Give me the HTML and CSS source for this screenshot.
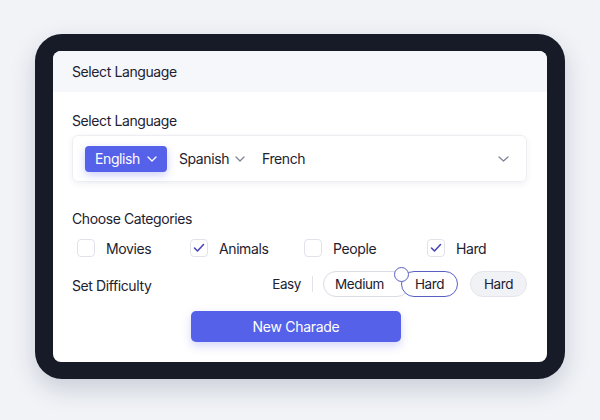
FILE: index.html
```html
<!DOCTYPE html>
<html>
<head>
<meta charset="utf-8">
<link rel="stylesheet" href="styles.css">
</head>
<body>
<div class="frame">
  <div class="screen">
    <div class="header">Select Language</div>
    <div class="content">
      <div class="label first">Select Language</div>
      <div class="select">
        <div class="pill active">English
          <svg class="chev" width="10" height="6" viewBox="0 0 10 6"><polyline points="1,1 5,5 9,1" fill="none" stroke="currentColor" stroke-width="1.3" stroke-linecap="round" stroke-linejoin="round"/></svg>
        </div>
        <div class="pill">Spanish
          <svg class="chev muted" width="10" height="6" viewBox="0 0 10 6"><polyline points="1,1 5,5 9,1" fill="none" stroke="currentColor" stroke-width="1.2" stroke-linecap="round" stroke-linejoin="round"/></svg>
        </div>
        <div class="pill">French</div>
        <svg class="chev end" width="11" height="6" viewBox="0 0 11 6"><polyline points="1,1 5.5,5 10,1" fill="none" stroke="currentColor" stroke-width="1.2" stroke-linecap="round" stroke-linejoin="round"/></svg>
      </div>
      <div class="label cat">Choose Categories</div>
      <div class="checks">
        <div class="check"><span class="box"></span>Movies</div>
        <div class="check"><span class="box"><svg width="12" height="10" viewBox="0 0 12 10"><polyline points="1.5,5 4.5,8 10.5,1.5" fill="none" stroke="#4a46b8" stroke-width="1.6" stroke-linecap="round" stroke-linejoin="round"/></svg></span>Animals</div>
        <div class="check"><span class="box"></span>People</div>
        <div class="check"><span class="box"><svg width="12" height="10" viewBox="0 0 12 10"><polyline points="1.5,5 4.5,8 10.5,1.5" fill="none" stroke="#4a46b8" stroke-width="1.6" stroke-linecap="round" stroke-linejoin="round"/></svg></span>Hard</div>
      </div>
      <div class="diff">
        <div class="diff-label">Set Difficulty</div>
        <div class="diff-group">
          <span class="easy">Easy</span>
          <span class="divider"></span>
          <span class="seg medium">Medium</span>
          <span class="seg hard">Hard<span class="knob"></span></span>
          <span class="seg alt">Hard</span>
        </div>
      </div>
      <button class="btn">New Charade</button>
    </div>
  </div>
</div>
</body>
</html>
```

FILE: styles.css
```css
* { box-sizing: border-box; }
html, body { margin: 0; padding: 0; }
body {
  width: 600px;
  height: 420px;
  background: #f1f3f7;
  font-family: Inter, "Noto Sans", sans-serif;
  color: #1d2130;
  letter-spacing: -0.4px;
  overflow: hidden;
}
.frame {
  margin: 34px 0 0 35px;
  width: 530px;
  height: 345px;
  background: #171b27;
  border-radius: 27px;
  padding: 17px 18px;
  box-shadow: 0 10px 24px rgba(30, 40, 70, 0.18);
}
.screen {
  background: #ffffff;
  border-radius: 8px;
  height: 311px;
  overflow: hidden;
  display: flex;
  flex-direction: column;
}
.header {
  height: 41px;
  background: #f5f7fa;
  padding-left: 19px;
  display: flex;
  align-items: center;
  font-size: 14px;
  font-weight: 420;
}
.content {
  padding: 0 20px 0 19px;
  display: flex;
  flex-direction: column;
}
.label {
  font-size: 14px;
  font-weight: 420;
  line-height: 20px;
}
.label.first { margin-top: 19px; }
.select {
  margin-top: 4px;
  height: 47px;
  border: 1px solid #eceef2;
  border-radius: 6px;
  box-shadow: 0 2px 6px rgba(30, 40, 80, 0.07);
  display: flex;
  align-items: center;
  padding: 0 17px 0 12px;
}
.pill {
  display: flex;
  align-items: center;
  height: 26px;
  font-size: 14px;
  margin-right: 17px;
  gap: 6px;
}
.pill.active {
  background: #5561e9;
  color: #fff;
  border-radius: 4px;
  padding: 0 10px 0 10px;
  box-shadow: 0 3px 8px rgba(85, 97, 233, 0.3);
  margin-right: 12px;
  gap: 7px;
}
.chev { display: block; color: #fff; flex-shrink: 0; }
.chev.muted { color: #7d8292; }
.chev.end { margin-left: auto; color: #7d8292; }
.label.cat { margin-top: 27px; }
.checks {
  margin-top: 8px;
  height: 22px;
  display: grid;
  grid-template-columns: 113px 114px 123px 1fr;
  padding-left: 5px;
}
.check {
  display: flex;
  align-items: center;
  font-size: 14px;
  gap: 11px;
}
.box {
  width: 18px;
  height: 18px;
  border: 1px solid #e1e3e9;
  border-radius: 4px;
  display: flex;
  align-items: center;
  justify-content: center;
  background: #fff;
}
.diff {
  margin-top: 12px;
  height: 26px;
  display: flex;
  align-items: center;
}
.diff-label {
  font-size: 14px;
  font-weight: 420;
  padding-top: 2px;
}
.diff-group {
  margin-left: auto;
  display: flex;
  align-items: center;
  font-size: 13.5px;
}
.easy { margin-right: 11px; }
.divider {
  width: 1px;
  height: 16px;
  background: #e1e3e9;
  margin-right: 10px;
}
.seg {
  height: 26px;
  border-radius: 13px;
  display: flex;
  align-items: center;
  justify-content: center;
  background: #fff;
}
.medium {
  width: 87px;
  border: 1px solid #d9dce3;
  justify-content: flex-start;
  padding-left: 11px;
}
.hard {
  position: relative;
  width: 57px;
  margin-left: -9px;
  border: 1.5px solid #5a5fc4;
}
.knob {
  position: absolute;
  left: -8px;
  top: -5px;
  width: 15px;
  height: 15px;
  border-radius: 50%;
  border: 1.5px solid #5a5fc4;
  background: #fff;
}
.alt {
  width: 57px;
  margin-left: 12px;
  background: #f1f2f5;
  border: 1px solid #e3e5ea;
}
.btn {
  margin-top: 14px;
  margin-left: 119px;
  width: 210px;
  height: 31px;
  border: none;
  border-radius: 5px;
  background: #5561e9;
  color: #fff;
  font-family: Inter, "Noto Sans", sans-serif;
  font-size: 14px;
  letter-spacing: -0.3px;
  box-shadow: 0 4px 10px rgba(85, 97, 233, 0.25);
}
```
